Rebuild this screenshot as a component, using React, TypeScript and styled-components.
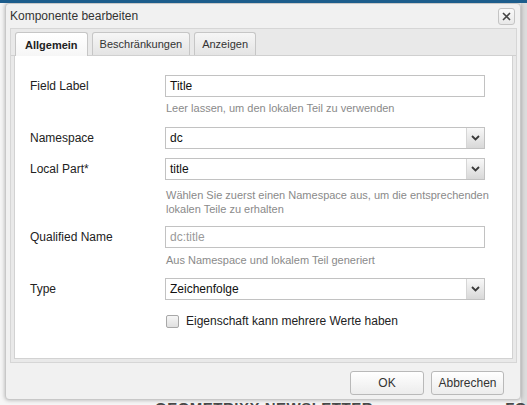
import React from 'react';
import styled, { createGlobalStyle } from 'styled-components';

const GlobalStyle = createGlobalStyle`
  html, body {
    margin: 0;
    padding: 0;
  }
  body {
    width: 527px;
    height: 405px;
    overflow: hidden;
    background: #e4e4e4;
    font-family: Tahoma, "Liberation Sans", Arial, sans-serif;
  }
`;

const Page = styled.div`
  position: relative;
  width: 527px;
  height: 405px;
  overflow: hidden;
  border-top: 3px solid #1d5d8c;
  box-sizing: border-box;
  background: linear-gradient(90deg, #f6f6f6 0, #f6f6f6 521px, #dcdcdc 521px);
`;

const Backdrop = styled.div`
  display: flex;
  justify-content: space-between;
  padding: 396px 0 0 155px;
  font-size: 15px;
  font-weight: bold;
  letter-spacing: 0.5px;
  color: #4a4a4a;
  white-space: nowrap;
`;

const Dialog = styled.div`
  position: absolute;
  left: 5px;
  top: 0;
  width: 516px;
  height: 397px;
  box-sizing: border-box;
  background: #f1f1f1;
  border: 1px solid #c8c8c8;
  border-radius: 4px;
  box-shadow: 0 0 4px rgba(0, 0, 0, 0.3);
  display: flex;
  flex-direction: column;
  padding: 0 3px 0 4px;
`;

const Header = styled.div`
  display: flex;
  align-items: center;
  justify-content: space-between;
  height: 24px;
  flex-shrink: 0;
  color: #333;
  font-size: 12px;
`;

const CloseButton = styled.button`
  width: 17px;
  height: 17px;
  padding: 0;
  margin-right: 2px;
  border: 1px solid #c4c4c4;
  border-radius: 3px;
  background: linear-gradient(#fafafa, #e8e8e8);
  display: flex;
  align-items: center;
  justify-content: center;
`;

const Body = styled.div`
  flex: 1;
  display: flex;
  flex-direction: column;
  border: 1px solid #d6d6d6;
  background: #e9e9e9;
`;

const TabStrip = styled.div`
  display: flex;
  align-items: flex-end;
  gap: 4px;
  padding: 0 0 0 4px;
  height: 26px;
  flex-shrink: 0;
  border-bottom: 1px solid #d0d0d0;
`;

const Tab = styled.div<{ $active?: boolean }>`
  display: flex;
  align-items: center;
  justify-content: center;
  padding: 0 ${({ $active }) => ($active ? 9 : 7)}px;
  height: ${({ $active }) => ($active ? 24 : 23)}px;
  box-sizing: border-box;
  font-size: 11px;
  font-weight: ${({ $active }) => ($active ? 'bold' : 'normal')};
  color: ${({ $active }) => ($active ? '#222' : '#333')};
  border: 1px solid #c6c6c6;
  border-bottom: none;
  border-radius: 3px 3px 0 0;
  margin-bottom: ${({ $active }) => ($active ? -1 : 0)}px;
  background: ${({ $active }) =>
    $active ? 'linear-gradient(#ffffff, #f6f6f6)' : 'linear-gradient(#f6f6f6, #e4e4e4)'};
`;

const Panel = styled.div`
  flex: 1;
  margin: 0 3px 3px 3px;
  background: #fff;
  border: 1px solid #d2d2d2;
  border-top: none;
  padding: 19px 0 0 15px;
  display: flex;
  flex-direction: column;
`;

const Row = styled.div<{ $gap: number }>`
  display: grid;
  grid-template-columns: 135px 320px;
  align-items: start;
  margin-bottom: ${({ $gap }) => $gap}px;
`;

const Label = styled.label`
  font-size: 12px;
  color: #222;
  line-height: 22px;
`;

const FieldCol = styled.div`
  display: flex;
  flex-direction: column;
`;

const Input = styled.div<{ $disabled?: boolean }>`
  height: 22px;
  box-sizing: border-box;
  border: 1px solid #c2c2c2;
  background: #fff;
  color: ${({ $disabled }) => ($disabled ? '#9a9a9a' : '#111')};
  font-size: 12px;
  line-height: 20px;
  padding-left: 4px;
  display: flex;
  justify-content: space-between;
`;

const SelectTrigger = styled.div`
  width: 17px;
  height: 20px;
  border-left: 1px solid #d6d6d6;
  background: linear-gradient(#f8f8f8, #d8d8d8);
  display: flex;
  align-items: center;
  justify-content: center;
`;

const Help = styled.div<{ $top: number }>`
  font-size: 11px;
  color: #8a8a8a;
  line-height: 14px;
  white-space: nowrap;
  padding: ${({ $top }) => $top}px 0 0 1px;
`;

const CheckRow = styled.label`
  display: flex;
  align-items: center;
  gap: 7px;
  font-size: 12px;
  color: #222;
  line-height: 14px;
  padding-left: 1px;
`;

const Box = styled.span`
  width: 11px;
  height: 11px;
  border: 1px solid #a8a8a8;
  border-radius: 2px;
  background: linear-gradient(#f6f6f6, #e0e0e0);
`;

const Footer = styled.div`
  display: flex;
  justify-content: flex-end;
  gap: 7px;
  padding: 8px 13px 0 0;
  height: 36px;
  box-sizing: border-box;
  flex-shrink: 0;
`;

const Button = styled.button<{ $w: number }>`
  width: ${({ $w }) => $w}px;
  height: 24px;
  border: 1px solid #b9b9b9;
  border-radius: 3px;
  background: linear-gradient(#ffffff, #ececec);
  font-family: inherit;
  font-size: 12px;
  color: #333;
`;

function Chevron() {
  return (
    <svg width="9" height="6" viewBox="0 0 9 6">
      <path d="M1 1l3.5 3.5L8 1" fill="none" stroke="#3a3a3a" strokeWidth="1.8" />
    </svg>
  );
}

function Select({ value }: { value: string }) {
  return (
    <Input>
      <span>{value}</span>
      <SelectTrigger>
        <Chevron />
      </SelectTrigger>
    </Input>
  );
}

export default function App() {
  return (
    <>
      <GlobalStyle />
      <Page>
        <Backdrop>
          <span>GEOMETRIXX NEWSLETTER</span>
          <span>FO</span>
        </Backdrop>
        <Dialog>
          <Header>
            <span>Komponente bearbeiten</span>
            <CloseButton aria-label="close">
              <svg width="11" height="11" viewBox="0 0 11 11">
                <path d="M2 2l7 7M9 2l-7 7" stroke="#444" strokeWidth="1.6" />
              </svg>
            </CloseButton>
          </Header>
          <Body>
            <TabStrip>
              <Tab $active>Allgemein</Tab>
              <Tab>Beschränkungen</Tab>
              <Tab>Anzeigen</Tab>
            </TabStrip>
            <Panel>
              <Row $gap={12}>
                <Label>Field Label</Label>
                <FieldCol>
                  <Input>Title</Input>
                  <Help $top={4}>Leer lassen, um den lokalen Teil zu verwenden</Help>
                </FieldCol>
              </Row>
              <Row $gap={9}>
                <Label>Namespace</Label>
                <Select value="dc" />
              </Row>
              <Row $gap={10}>
                <Label>Local Part*</Label>
                <FieldCol>
                  <Select value="title" />
                  <Help $top={8}>
                    Wählen Sie zuerst einen Namespace aus, um die entsprechenden
                    <br />
                    lokalen Teile zu erhalten
                  </Help>
                </FieldCol>
              </Row>
              <Row $gap={11}>
                <Label>Qualified Name</Label>
                <FieldCol>
                  <Input $disabled>dc:title</Input>
                  <Help $top={5}>Aus Namespace und lokalem Teil generiert</Help>
                </FieldCol>
              </Row>
              <Row $gap={14}>
                <Label>Type</Label>
                <Select value="Zeichenfolge" />
              </Row>
              <Row $gap={0}>
                <span />
                <CheckRow>
                  <Box />
                  Eigenschaft kann mehrere Werte haben
                </CheckRow>
              </Row>
            </Panel>
          </Body>
          <Footer>
            <Button $w={74}>OK</Button>
            <Button $w={73}>Abbrechen</Button>
          </Footer>
        </Dialog>
      </Page>
    </>
  );
}
